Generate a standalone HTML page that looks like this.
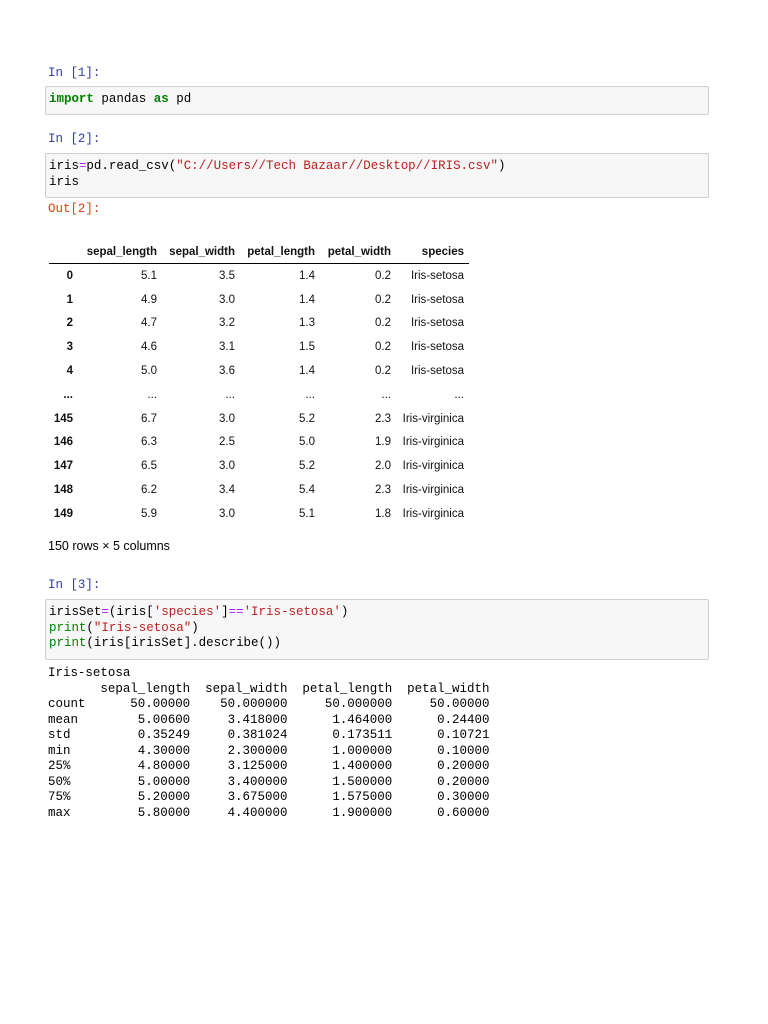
<!DOCTYPE html>
<html><head><meta charset="utf-8"><style>
body{margin:0;width:768px;height:1024px;background:#fff;position:relative;overflow:hidden}
.m{font-family:"Liberation Mono",monospace;font-size:12.48px;line-height:15.5px;position:absolute;white-space:pre;color:#000}
.p{color:#303f9f}.o{color:#d84315}
.cell{position:absolute;left:45px;width:662px;background:#f7f7f7;border:1px solid #cfcfcf;border-radius:2px}
.k{color:#008000;font-weight:bold}.s{color:#ba2121}.b{color:#008000}.op{color:#aa22ff}
.r{position:absolute;font-family:"Liberation Sans",sans-serif;font-size:11.5px;line-height:14px;height:14px;left:0;width:768px;color:#111}
.r span{position:absolute;white-space:nowrap}
.h{font-weight:bold}
</style></head><body>
<div class="m p" style="left:48px;top:66px">In [1]:</div>
<div class="cell" style="top:86px;height:27px"></div>
<div class="m" style="left:49px;top:92px"><span class="k">import</span> pandas <span class="k">as</span> pd</div>
<div class="m p" style="left:48px;top:132px">In [2]:</div>
<div class="cell" style="top:153px;height:43px"></div>
<div class="m" style="left:49px;top:159px">iris<span class="op">=</span>pd.read_csv(<span class="s">"C://Users//Tech Bazaar//Desktop//IRIS.csv"</span>)
iris</div>
<div class="m o" style="left:48px;top:202px">Out[2]:</div>

<div id="tbl"></div>
<div style="position:absolute;left:49px;top:263px;width:420px;height:1px;background:#000"></div>
<div style="position:absolute;left:48px;top:539px;font-family:'Liberation Sans',sans-serif;font-size:12.5px">150 rows × 5 columns</div>

<div class="m p" style="left:48px;top:578px">In [3]:</div>
<div class="cell" style="top:599px;height:59px"></div>
<div class="m" style="left:49px;top:605px">irisSet<span class="op">=</span>(iris[<span class="s">'species'</span>]<span class="op">==</span><span class="s">'Iris-setosa'</span>)
<span class="b">print</span>(<span class="s">"Iris-setosa"</span>)
<span class="b">print</span>(iris[irisSet].describe())</div>
<div class="m" style="left:48px;top:666px">Iris-setosa
       sepal_length  sepal_width  petal_length  petal_width
count      50.00000    50.000000     50.000000     50.00000
mean        5.00600     3.418000      1.464000      0.24400
std         0.35249     0.381024      0.173511      0.10721
min         4.30000     2.300000      1.000000      0.10000
25%         4.80000     3.125000      1.400000      0.20000
50%         5.00000     3.400000      1.500000      0.20000
75%         5.20000     3.675000      1.575000      0.30000
max         5.80000     4.400000      1.900000      0.60000</div>
<script>
var R=[73,157,235,315,391,464];
var rows=[
["","sepal_length","sepal_width","petal_length","petal_width","species",251,1],
["0","5.1","3.5","1.4","0.2","Iris-setosa",275],
["1","4.9","3.0","1.4","0.2","Iris-setosa",299],
["2","4.7","3.2","1.3","0.2","Iris-setosa",322],
["3","4.6","3.1","1.5","0.2","Iris-setosa",346],
["4","5.0","3.6","1.4","0.2","Iris-setosa",370],
["...","...","...","...","...","...",394],
["145","6.7","3.0","5.2","2.3","Iris-virginica",418],
["146","6.3","2.5","5.0","1.9","Iris-virginica",441],
["147","6.5","3.0","5.2","2.0","Iris-virginica",465],
["148","6.2","3.4","5.4","2.3","Iris-virginica",489],
["149","5.9","3.0","5.1","1.8","Iris-virginica",513]];
var h="";
rows.forEach(function(r){h+='<div class="r" style="top:'+(r[6]-6)+'px">';
for(var i=0;i<6;i++){h+='<span class="'+((i==0||r[7])?'h':'')+'" style="right:'+(768-R[i])+'px">'+r[i]+'</span>';}
h+='</div>';});
document.getElementById('tbl').innerHTML=h;
</script>
</body></html>
